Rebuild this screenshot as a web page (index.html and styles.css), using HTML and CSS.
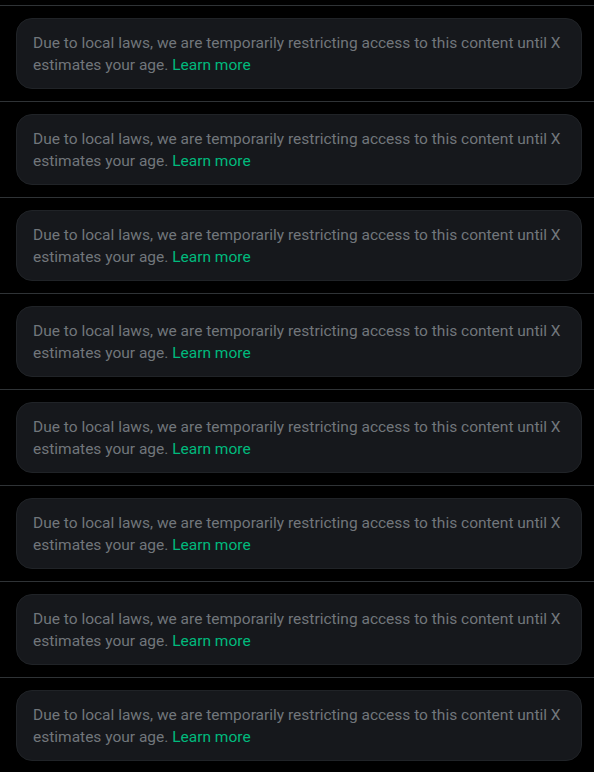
FILE: index.html
```html
<!DOCTYPE html>
<html>
	<head>
		<title>Timeline</title>
		<link rel="stylesheet" href="styles.css">
	</head>
	<body>
		<div class="timeline">
			<div class="cell"><div class="notice">Due to local laws, we are temporarily restricting access to this content until X estimates your age. <a href="#">Learn more</a></div></div>
			<div class="cell"><div class="notice">Due to local laws, we are temporarily restricting access to this content until X estimates your age. <a href="#">Learn more</a></div></div>
			<div class="cell"><div class="notice">Due to local laws, we are temporarily restricting access to this content until X estimates your age. <a href="#">Learn more</a></div></div>
			<div class="cell"><div class="notice">Due to local laws, we are temporarily restricting access to this content until X estimates your age. <a href="#">Learn more</a></div></div>
			<div class="cell"><div class="notice">Due to local laws, we are temporarily restricting access to this content until X estimates your age. <a href="#">Learn more</a></div></div>
			<div class="cell"><div class="notice">Due to local laws, we are temporarily restricting access to this content until X estimates your age. <a href="#">Learn more</a></div></div>
			<div class="cell"><div class="notice">Due to local laws, we are temporarily restricting access to this content until X estimates your age. <a href="#">Learn more</a></div></div>
			<div class="cell"><div class="notice">Due to local laws, we are temporarily restricting access to this content until X estimates your age. <a href="#">Learn more</a></div></div>
		</div>
	</body>
</html>
```
FILE: styles.css
```css
html, body {padding: 0px; margin: 0px; background: #000;}
body {font-family: Roboto, "Liberation Sans", sans-serif;}
.timeline {padding-top: 5px;}
.cell {border-top: 1px solid #2f3336; padding: 12px 12px 12px 16px;}
.notice {background: #16181c; border: 1px solid #202327; border-radius: 16px; padding: 13px 16px 12px; color: #71767b; font-size: 15.5px; line-height: 22px;}
.notice a {color: #00ba7c; text-decoration: none;}
```
